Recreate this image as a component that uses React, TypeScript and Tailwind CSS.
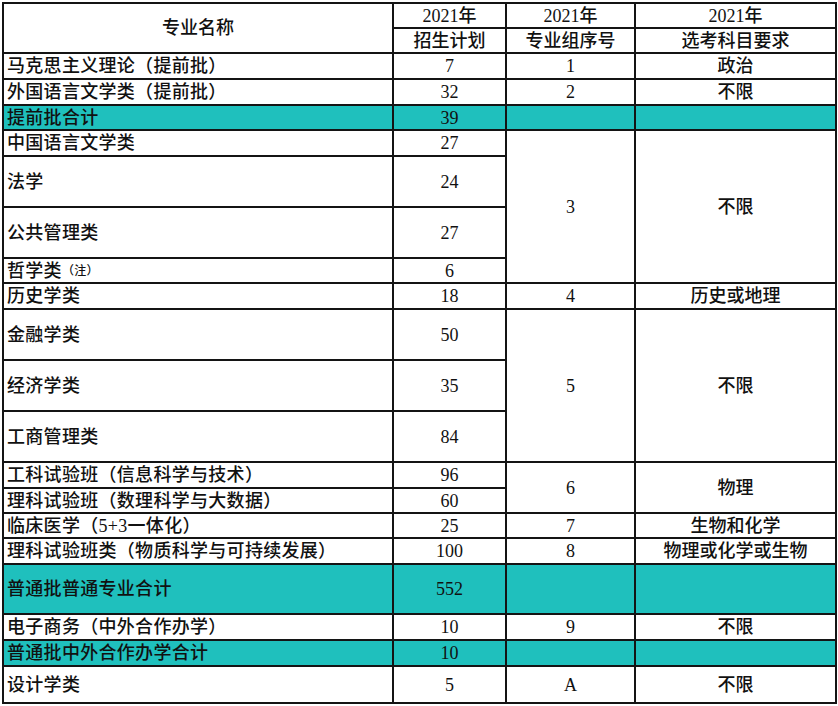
import React from 'react';

type Row = {
  name: React.ReactNode;
  plan: string;
  group?: { text: string; span: number } | null;
  subject?: { text: string; span: number } | null;
  total?: boolean;
};

// null = covered by a cell above (row-span)
const rows: Row[] = [
  { name: '马克思主义理论（提前批）', plan: '7', group: { text: '1', span: 1 }, subject: { text: '政治', span: 1 } },
  { name: '外国语言文学类（提前批）', plan: '32', group: { text: '2', span: 1 }, subject: { text: '不限', span: 1 } },
  { name: '提前批合计', plan: '39', group: { text: '', span: 1 }, subject: { text: '', span: 1 }, total: true },
  { name: '中国语言文学类', plan: '27', group: { text: '3', span: 4 }, subject: { text: '不限', span: 4 } },
  { name: '法学', plan: '24', group: null, subject: null },
  { name: '公共管理类', plan: '27', group: null, subject: null },
  {
    name: (
      <>
        哲学类<span className="text-[12px]">（注）</span>
      </>
    ),
    plan: '6',
    group: null,
    subject: null,
  },
  { name: '历史学类', plan: '18', group: { text: '4', span: 1 }, subject: { text: '历史或地理', span: 1 } },
  { name: '金融学类', plan: '50', group: { text: '5', span: 3 }, subject: { text: '不限', span: 3 } },
  { name: '经济学类', plan: '35', group: null, subject: null },
  { name: '工商管理类', plan: '84', group: null, subject: null },
  { name: '工科试验班（信息科学与技术）', plan: '96', group: { text: '6', span: 2 }, subject: { text: '物理', span: 2 } },
  { name: '理科试验班（数理科学与大数据）', plan: '60', group: null, subject: null },
  { name: '临床医学（5+3一体化）', plan: '25', group: { text: '7', span: 1 }, subject: { text: '生物和化学', span: 1 } },
  { name: '理科试验班类（物质科学与可持续发展）', plan: '100', group: { text: '8', span: 1 }, subject: { text: '物理或化学或生物', span: 1 } },
  { name: '普通批普通专业合计', plan: '552', group: { text: '', span: 1 }, subject: { text: '', span: 1 }, total: true },
  { name: '电子商务（中外合作办学）', plan: '10', group: { text: '9', span: 1 }, subject: { text: '不限', span: 1 } },
  { name: '普通批中外合作办学合计', plan: '10', group: { text: '', span: 1 }, subject: { text: '', span: 1 }, total: true },
  { name: '设计学类', plan: '5', group: { text: 'A', span: 1 }, subject: { text: '不限', span: 1 } },
];

const spanClass: Record<number, string> = {
  1: '',
  2: 'row-span-2',
  3: 'row-span-3',
  4: 'row-span-4',
};

export default function App() {
  return (
    <div className="bg-white w-[838px] h-[706px] overflow-hidden font-['Liberation_Serif','Noto_Sans_CJK_SC',serif] font-medium text-[18px] text-[#111] leading-none">
      <div className="mt-[2px] ml-[2px] w-fit grid grid-cols-[388px_111px_127px_199px] grid-rows-[23px_23px_24px_24px_23px_24px_49px_49px_23px_24px_49px_49px_49px_24px_23px_23px_24px_48px_24px_24px_35px] gap-[2px] p-[2px] bg-[#141414]">
        {/* header */}
        <div className="row-span-2 bg-white flex items-center justify-center">专业名称</div>
        <div className="bg-white flex items-center justify-center">2021年</div>
        <div className="bg-white flex items-center justify-center">2021年</div>
        <div className="bg-white flex items-center justify-center">2021年</div>
        <div className="bg-white flex items-center justify-center">招生计划</div>
        <div className="bg-white flex items-center justify-center">专业组序号</div>
        <div className="bg-white flex items-center justify-center">选考科目要求</div>

        {rows.map((row, i) => {
          const bg = row.total ? 'bg-[#1fc0bd]' : 'bg-white';
          return (
            <React.Fragment key={i}>
              <div className={`${bg} flex items-center pl-[3px] whitespace-nowrap tracking-[0.3px]`}>{row.name}</div>
              <div className={`${bg} flex items-center justify-center`}>{row.plan}</div>
              {row.group && (
                <div className={`${bg} ${spanClass[row.group.span]} flex items-center justify-center`}>
                  {row.group.text}
                </div>
              )}
              {row.subject && (
                <div className={`${bg} ${spanClass[row.subject.span]} flex items-center justify-center`}>
                  {row.subject.text}
                </div>
              )}
            </React.Fragment>
          );
        })}
      </div>
    </div>
  );
}
